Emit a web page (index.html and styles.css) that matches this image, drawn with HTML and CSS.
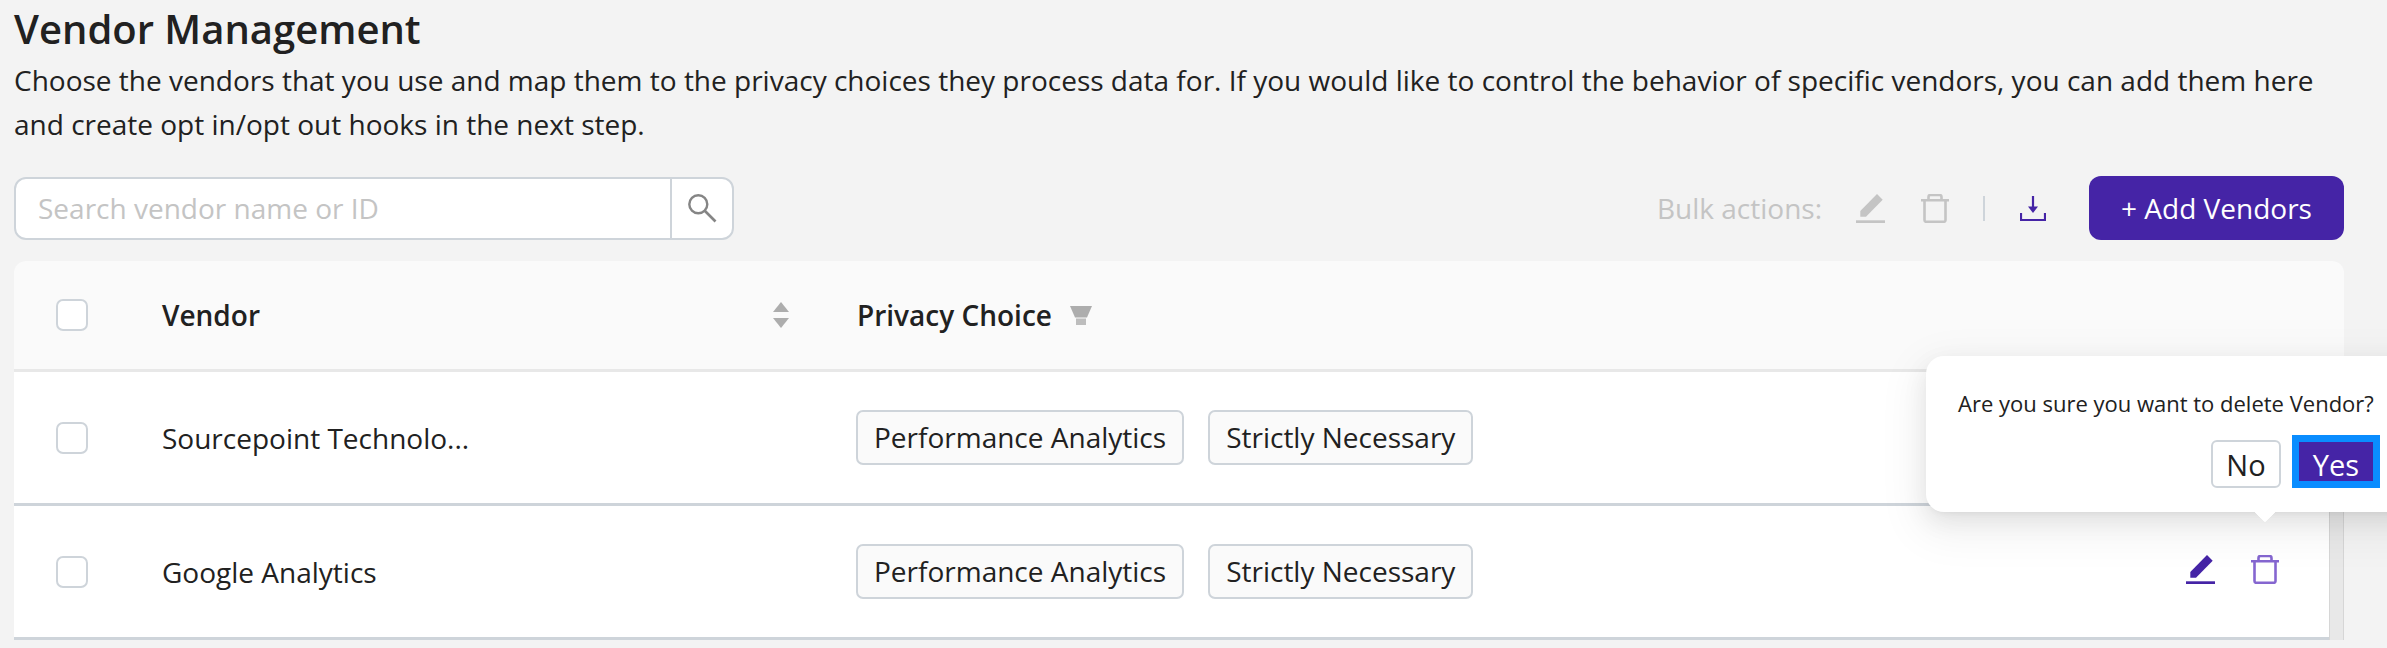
FILE: index.html
```html
<!DOCTYPE html>
<html lang="en">
<head>
<meta charset="utf-8">
<title>Vendor Management</title>
<link rel="stylesheet" href="styles.css">
</head>
<body>
<main class="page">
  <h1 class="title">Vendor Management</h1>
  <p class="desc">Choose the vendors that you use and map them to the privacy choices they process data for. If you would like to control the behavior of specific vendors, you can add them here and create opt in/opt out hooks in the next step.</p>
  <div class="toolbar">
    <div class="search">
      <span class="search-input">Search vendor name or ID</span>
      <span class="search-btn">
        <svg class="ico-search" viewBox="0 0 30 30"><circle cx="11.3" cy="11.3" r="9" fill="none" stroke="#858585" stroke-width="2.4"/><path d="M18 18l10.5 10.5" stroke="#858585" stroke-width="2.6" fill="none"/></svg>
      </span>
    </div>
    <div class="actions">
      <span class="bulk-label">Bulk actions:</span>
      <svg class="ico-edit" viewBox="0 0 29 29"><path class="fill-off" d="M4.3 22.7V17L21 0l5.7 5.7L10 22.7z"/><rect class="fill-off" x="0" y="26.3" width="29" height="2.7"/></svg>
      <svg class="ico-trash" viewBox="0 0 28 29"><path class="stroke-off" d="M0 6.2h28M7.5 6V3a2 2 0 0 1 2-2h9a2 2 0 0 1 2 2v3M3.5 6.5v19.5a1.8 1.8 0 0 0 1.8 1.8h17.4a1.8 1.8 0 0 0 1.8-1.8V6.5"/></svg>
      <span class="sep"></span>
      <svg class="ico-download" viewBox="0 0 26 25"><path d="M13 0v12" stroke="#4524a6" stroke-width="2.2" fill="none"/><path d="M8 10.5h10L13 17z" fill="#4524a6"/><path d="M1 17v7h24v-7" stroke="#4524a6" stroke-width="2.2" fill="none"/></svg>
      <button class="add-btn">+ Add Vendors</button>
    </div>
  </div>
  <section class="table">
    <div class="row head">
      <div class="c-check"><span class="checkbox"></span></div>
      <div class="c-vendor"><span>Vendor</span>
        <svg class="ico-sort" viewBox="0 0 16 26"><path d="M8 0l8 10H0z" fill="#adadad"/><path d="M0 16h16L8 26z" fill="#adadad"/></svg>
      </div>
      <div class="c-choice"><span>Privacy Choice</span>
        <svg class="ico-filter" viewBox="0 0 22 19"><path d="M0 0h22l-5 11.5H5z" fill="#adadad"/><rect x="6" y="12.5" width="10" height="6.5" fill="#bdbdbd"/></svg>
      </div>
    </div>
    <div class="rows">
      <div class="row body">
        <div class="c-check"><span class="checkbox"></span></div>
        <div class="c-vendor">Sourcepoint Technolo...</div>
        <div class="c-choice"><span class="chip">Performance Analytics</span><span class="chip">Strictly Necessary</span></div>
      </div>
      <div class="row body">
        <div class="c-check"><span class="checkbox"></span></div>
        <div class="c-vendor">Google Analytics</div>
        <div class="c-choice"><span class="chip">Performance Analytics</span><span class="chip">Strictly Necessary</span></div>
        <div class="c-ops">
          <svg class="ico-edit" viewBox="0 0 29 29"><path class="fill-on" d="M4.3 22.7V17L21 0l5.7 5.7L10 22.7z"/><rect class="fill-on" x="0" y="26.3" width="29" height="2.7"/></svg>
          <svg class="ico-trash" viewBox="0 0 28 29"><path class="stroke-on" d="M0 6.2h28M7.5 6V3a2 2 0 0 1 2-2h9a2 2 0 0 1 2 2v3M3.5 6.5v19.5a1.8 1.8 0 0 0 1.8 1.8h17.4a1.8 1.8 0 0 0 1.8-1.8V6.5"/></svg>
        </div>
      </div>
    </div>
    <div class="popover">
      <p class="pop-text">Are you sure you want to delete Vendor?</p>
      <div class="pop-btns">
        <button class="btn-no">No</button>
        <button class="btn-yes">Yes</button>
      </div>
      <span class="pop-arrow"></span>
    </div>
  </section>
</main>
</body>
</html>
```

FILE: styles.css
```css
* { box-sizing: border-box; }
html, body { margin: 0; height: 100%; overflow: hidden; }
body { background: #f3f3f3; color: #212121; font-family: "Open Sans", sans-serif; }
.page { padding: 0 43px 0 14px; width: 2387px; }
.title { margin: 0; font-size: 40px; font-weight: 600; line-height: 58px; }
.desc { margin: 0; font-size: 28px; line-height: 44px; padding-top: 0; }
.toolbar { display: flex; justify-content: space-between; align-items: center; margin-top: 30px; height: 64px; }
.search { display: flex; width: 720px; height: 63px; background: #fff; border: 2px solid #ced4da; border-radius: 12px; }
.search-input { flex: 1; padding-left: 22px; line-height: 59px; font-size: 28px; color: #c4c4c4; }
.search-btn { width: 62px; border-left: 2px solid #ced4da; display: flex; align-items: center; justify-content: center; }
.ico-search { width: 30px; height: 30px; }
.actions { display: flex; align-items: center; }
.bulk-label { font-size: 28px; color: #c4c4c4; margin-right: 34px; }
.ico-edit { width: 29px; height: 29px; }
.ico-trash { width: 28px; height: 29px; }
.actions .ico-trash { margin-left: 36px; }
.sep { width: 2px; height: 25px; background: #ced4da; margin-left: 34px; }
.ico-download { width: 26px; height: 25px; margin-left: 35px; }
.add-btn { margin-left: 43px; width: 255px; height: 64px; border: 0; border-radius: 12px; background: #4524a6; color: #fff; font: 400 28px "Open Sans", sans-serif; }
.fill-off { fill: #c4c4c4; }
.fill-on { fill: #4524a6; }
.stroke-off, .stroke-on { fill: none; stroke-width: 2.6; }
.stroke-off { stroke: #c4c4c4; }
.stroke-on { stroke: #8566d0; }
.table { position: relative; margin-top: 21px; width: 2330px; }
.row { display: flex; align-items: center; }
.head { height: 111px; background: #fafafa; border-radius: 12px 12px 0 0; border-bottom: 3px solid #e8e8e8; font-weight: 600; font-size: 28px; }
.rows { padding-right: 14px; background: #e8e8e8; border-right: 1px solid #d6d6d6; }
.body { height: 134px; background: #fff; border-bottom: 3px solid #ced4da; font-size: 28px; position: relative; box-shadow: 1px 0 #d6d6d6; }
.c-check { width: 148px; padding-left: 42px; display: flex; }
.checkbox { width: 32px; height: 32px; background: #fff; border: 2px solid #ced4da; border-radius: 7px; }
.c-vendor { width: 695px; display: flex; justify-content: space-between; align-items: center; padding-right: 68px; }
.c-choice { display: flex; align-items: center; }
.ico-sort { width: 16px; height: 26px; }
.ico-filter { width: 22px; height: 19px; margin-left: 18px; }
.chip { display: block; height: 55px; line-height: 50px; padding: 0 16px; background: #fafafa; border: 2px solid #ced4da; border-radius: 7px; margin: 0 24px 0 0; }
.chip:first-child { margin-left: -1px; }
.c-ops { position: absolute; right: 50px; top: 49px; display: flex; gap: 36px; }
.popover { position: absolute; left: 1912px; top: 95px; width: 520px; height: 156px; background: #fff; border-radius: 18px; padding: 30px 0 0 32px; box-shadow: 0 4px 9px -6px rgba(0,0,0,.12), 0 9px 24px 0 rgba(0,0,0,.08), 0 14px 42px 12px rgba(0,0,0,.05); }
.pop-text { margin: 0; font-size: 22px; line-height: 34px; }
.pop-btns { display: flex; align-items: flex-end; margin-top: 15px; padding-left: 253px; height: 53px; }
.btn-no { width: 70px; height: 48px; background: #fff; border: 2px solid #ced4da; border-radius: 6px; color: #212121; font: 400 29px "Open Sans", sans-serif; padding: 0; }
.btn-yes { width: 88px; height: 53px; margin-left: 11px; background: #4524a6; border: 7px solid #0a8dff; border-radius: 0; color: #fff; font: 400 29px "Open Sans", sans-serif; padding: 3px 0 0; }
.pop-arrow { position: absolute; left: 330px; top: 145px; width: 18px; height: 18px; background: #fff; transform: rotate(45deg); border-radius: 2px; clip-path: polygon(100% 0, 100% 100%, 0 100%); }
```
